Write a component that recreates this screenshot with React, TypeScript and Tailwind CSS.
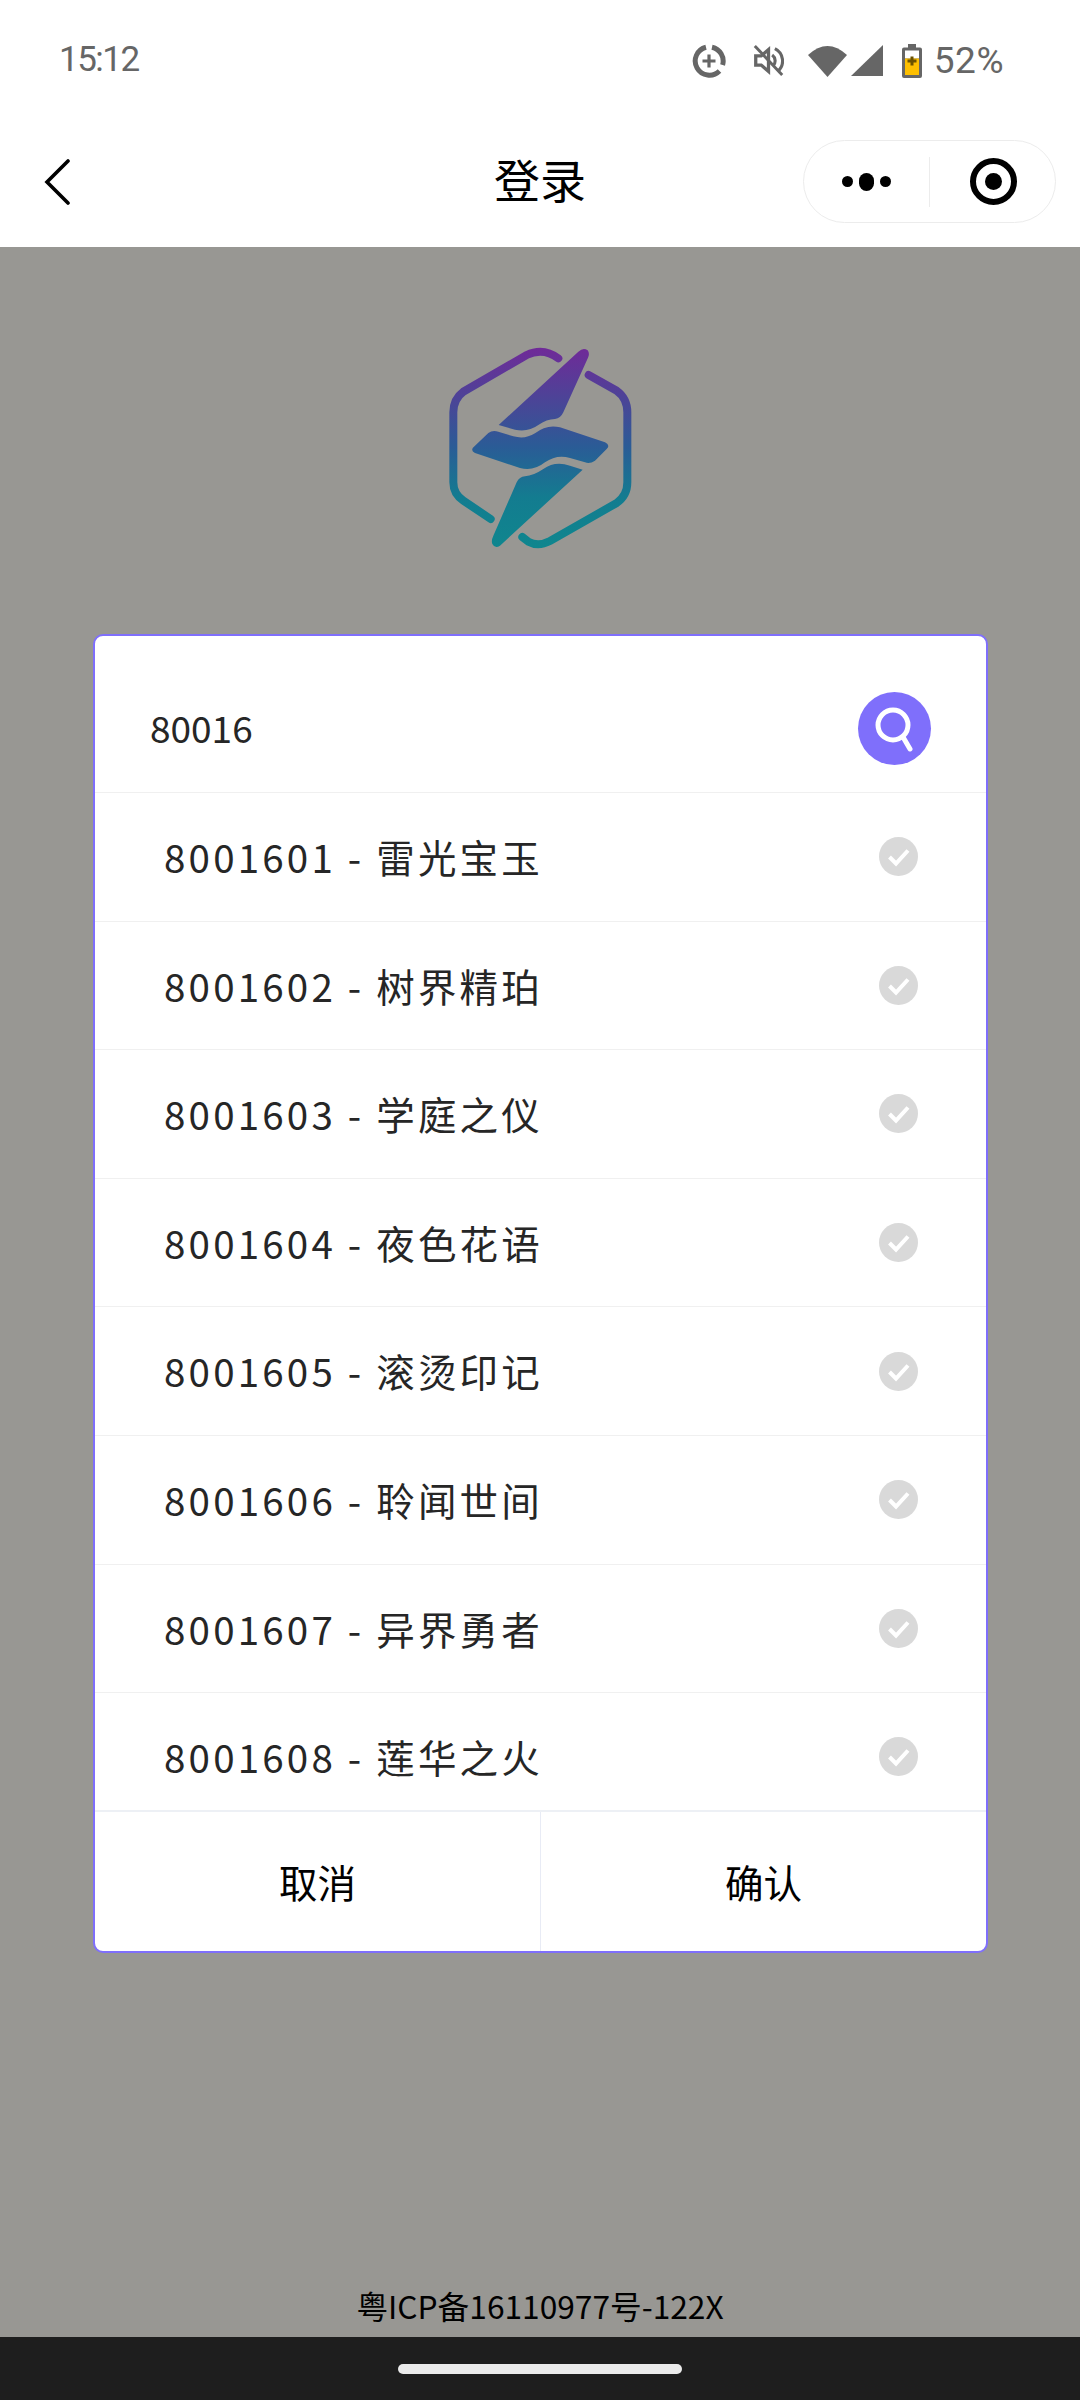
const fontCjk = "font-['Noto_Sans_CJK_SC','Noto_Sans',sans-serif]";

const items = [
  "8001601 - 雷光宝玉",
  "8001602 - 树界精珀",
  "8001603 - 学庭之仪",
  "8001604 - 夜色花语",
  "8001605 - 滚烫印记",
  "8001606 - 聆闻世间",
  "8001607 - 异界勇者",
  "8001608 - 莲华之火",
];

function StatusIcons() {
  return (
    <div className="flex items-center">
      {/* data saver */}
      <svg width="34" height="34" viewBox="0 0 34 34" className="mr-[27px]">
        <path d="M20 3.200 A14.200 14.200 0 0 1 30.600 21 M27.500 27 A14.200 14.200 0 1 1 14 3.200" fill="none" stroke="#666" strokeWidth="5" />
        <path d="M17 10.500v13M10.500 17h13" stroke="#666" strokeWidth="3.200" />
      </svg>
      {/* muted */}
      <svg width="31" height="33" viewBox="0 0 34 36" className="mr-[24px]">
        <path d="M2 2 L32 34" stroke="#666" strokeWidth="3.200" />
        <path d="M3 13h6l8-7v24l-8-7H3z" fill="none" stroke="#666" strokeWidth="3.600" />
        <path d="M21 12a8 8 0 0 1 1 12M24 5a15 15 0 0 1 3 25" fill="none" stroke="#666" strokeWidth="3.400" />
      </svg>
      {/* wifi */}
      <svg width="39" height="33" viewBox="0 0 39 33" className="mr-[4px]">
        <path d="M0 11 Q19.500 -7 39 11 L19.500 33 Z" fill="#666" />
      </svg>
      {/* signal */}
      <svg width="32" height="31" viewBox="0 0 32 31" className="mr-[19px]">
        <path d="M32 0V31H0Z" fill="#666" />
      </svg>
      {/* battery */}
      <svg width="20" height="34" viewBox="0 0 20 34" className="mr-[12px]">
        <path d="M6 0h8v3.500h4a2 2 0 0 1 2 2V32a2 2 0 0 1-2 2H2a2 2 0 0 1-2-2V5.500a2 2 0 0 1 2-2h4z" fill="#666" />
        <rect x="3" y="6.500" width="14" height="8" fill="#fff" />
        <rect x="3" y="14.500" width="14" height="16.500" fill="#fdbf00" />
        <path d="M10 12.500v9M5.500 17h9" stroke="#6b5200" strokeWidth="3" />
      </svg>
      <span className="font-['Roboto',sans-serif] text-[37px] leading-none tracking-[0.5px] text-[#666]">52%</span>
    </div>
  );
}

function Logo() {
  return (
    <svg width="280" height="250" viewBox="0 0 840 750">
      <defs>
        <linearGradient id="lg" gradientUnits="userSpaceOnUse" x1="0" y1="85" x2="0" y2="685">
          <stop offset="0" stopColor="#702a98" />
          <stop offset="0.5" stopColor="#2a5c96" />
          <stop offset="0.75" stopColor="#137c90" />
          <stop offset="1" stopColor="#0f868e" />
        </linearGradient>
      </defs>
      <g fill="none" stroke="url(#lg)" strokeWidth="24" strokeLinecap="round">
        <path d="M475 118 Q430 84 380 108 L190 218 Q160 240 160 280 V490 Q160 525 190 545 L272 600" />
        <path d="M566 168 L650 215 Q682 238 682 280 V490 Q682 530 650 552 L450 666 Q415 684 385 668 L367 654" />
      </g>
      <g fill="url(#lg)">
        <path d="M296 318 L535 98 Q550 84 563 94 Q570 103 564 116 L490 280 Q482 298 465 300 Q440 300 415 318 Q385 340 345 332 Z" />
        <path d="M225 380 L265 342 Q278 332 295 338 L340 352 Q375 362 405 343 Q440 315 480 325 L615 370 Q632 378 620 390 L585 425 Q570 435 555 430 L510 417 Q470 405 435 430 Q400 458 360 447 L225 402 Q208 393 225 380 Z" />
        <path d="M548 452 L300 680 Q285 690 277 675 Q273 665 280 650 L350 490 Q358 473 375 472 Q400 470 430 450 Q465 425 510 440 Z" />
      </g>
    </svg>
  );
}

function Row({ label }: { label: string }) {
  return (
    <div className="flex h-[128.6px] shrink-0 items-center justify-between border-b border-[#f0f0f0] pl-[69px] pr-[68px]">
      <span className="-mt-[1px] text-[38.5px] leading-none tracking-[3.2px] text-[#262626]">{label}</span>
      <svg width="39" height="39" viewBox="0 0 39 39">
        <circle cx="19.500" cy="19.500" r="19.500" fill="#d9d9d9" />
        <path d="M10.500 20 L17 26.500 L29 13.500" fill="none" stroke="#fff" strokeWidth="4" />
      </svg>
    </div>
  );
}

export default function App() {
  return (
    <div className={`flex h-[2400px] w-[1080px] flex-col bg-white ${fontCjk}`}>
      {/* Status bar */}
      <div className="flex h-[110px] shrink-0 items-start justify-between pl-[59px] pr-[76px] pt-[42px]">
        <span className="font-['Roboto',sans-serif] text-[35px] leading-none tracking-[-1.5px] text-[#666]">15:12</span>
        <StatusIcons />
      </div>

      {/* Nav */}
      <div className="relative flex h-[137px] shrink-0 items-center justify-center">
        <svg width="26" height="46" viewBox="0 0 26 46" className="absolute left-[44px] top-[49px]">
          <path d="M24 2 L3 23 L24 44" fill="none" stroke="#000" strokeWidth="3.600" strokeLinecap="round" />
        </svg>
        <span className="-mt-[2px] text-[46px] leading-none text-black">登录</span>
        <div className="absolute left-[803px] top-[30px] flex h-[83px] w-[253px] items-center rounded-full border border-[#ececec]">
          <div className="flex w-[125px] items-center justify-center gap-[6px]">
            <span className="h-[11px] w-[11px] rounded-full bg-black" />
            <span className="h-[18px] w-[15px] rounded-full bg-black" />
            <span className="h-[11px] w-[11px] rounded-full bg-black" />
          </div>
          <div className="h-[50px] w-px bg-[#ececec]" />
          <div className="flex flex-1 items-center justify-center">
            <div className="ml-[2px] flex h-[47px] w-[47px] items-center justify-center rounded-full border-[6px] border-black">
              <span className="h-[17px] w-[17px] rounded-full bg-black" />
            </div>
          </div>
        </div>
      </div>

      {/* Page */}
      <div className="flex flex-1 flex-col items-center bg-[#989793]">
        <div className="mt-[72px]">
          <Logo />
        </div>

        <div className="ml-[1px] mt-[65px] flex h-[1319px] w-[895px] flex-col overflow-hidden rounded-[10px] border-2 border-[#7f6ffb] bg-white">
          <div className="flex h-[157px] shrink-0 items-center justify-between border-b border-[#f0f0f0] pl-[55px] pr-[55px] pt-[29px]">
            <span className="-mt-[3px] text-[37px] leading-none text-[#262626]">80016</span>
            <div className="flex h-[73px] w-[73px] items-center justify-center rounded-full bg-[#7f6ffb]">
              <svg width="44" height="46" viewBox="0 0 44 46" fill="none" stroke="#fff" strokeWidth="5" strokeLinecap="round">
                <circle cx="20" cy="19" r="15" />
                <path d="M30 31 L37 43" />
              </svg>
            </div>
          </div>

          <div className="flex flex-1 flex-col overflow-hidden">
            {items.map((label) => (
              <Row key={label} label={label} />
            ))}
          </div>

          <div className="flex h-[141px] shrink-0 border-t-2 border-[#edf0f5]">
            <div className="flex flex-1 items-center justify-center border-r border-[#e8ebf5] text-[38.5px] leading-none text-black">取消</div>
            <div className="flex flex-1 items-center justify-center text-[38.5px] leading-none text-black">确认</div>
          </div>
        </div>

        <div className="mt-auto pb-[15px] text-[31.7px] leading-none text-black">粤ICP备16110977号-122X</div>
      </div>

      {/* Android nav */}
      <div className="flex h-[63px] shrink-0 items-center justify-center bg-[#1e1e1e]">
        <div className="h-[10px] w-[284px] rounded-full bg-[#ebebeb]" />
      </div>
    </div>
  );
}
